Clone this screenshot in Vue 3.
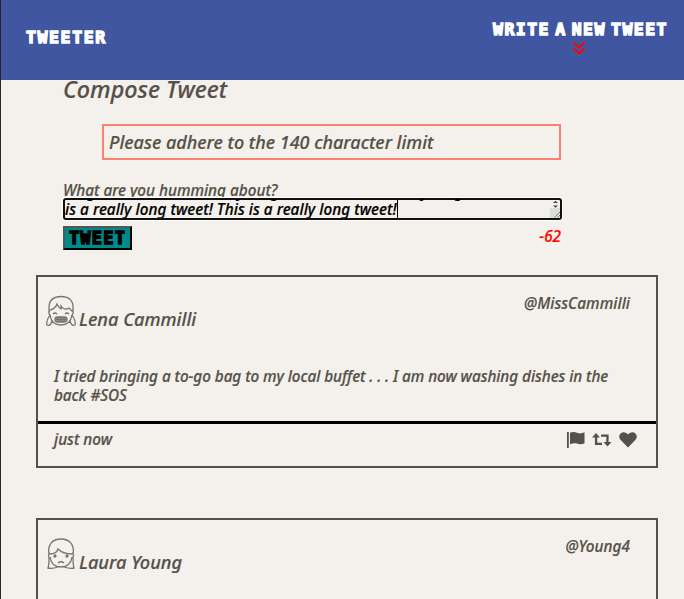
<script setup>
const tweets = [
  {
    name: 'Lena Cammilli',
    handle: '@MissCammilli',
    text: 'I tried bringing a to-go bag to my local buffet . . . I am now washing dishes in the back #SOS',
    age: 'just now',
    mood: 'grin',
  },
  { name: 'Laura Young', handle: '@Young4', text: '', age: '', mood: 'sad' },
]
</script>

<template>
  <div class="page">
    <nav class="nav">
      <span class="brand">TWEETER</span>
      <div class="compose-link">
        <span class="compose-text">WRITE A NEW TWEET</span>
        <svg class="chevrons" viewBox="0 0 14 14"><path d="M1.500 1.500 7 6.500l5.500-5M1.500 7.500 7 12.500l5.500-5" /></svg>
      </div>
    </nav>

    <main class="container">
      <section class="new-tweet">
        <h2 class="heading">Compose Tweet</h2>
        <div class="error"><span class="error-text">Please adhere to the 140 character limit</span></div>
        <div class="label">What are you humming about?</div>
        <div class="field">
          <div class="field-view">
            <div class="field-lines">
              <div class="line">long tweet! This is a really long tweet! This is a really long tweet! This</div>
              <div class="line current">is a really long tweet! This is a really long tweet!<i class="caret"></i></div>
            </div>
          </div>
          <svg class="scroller" viewBox="0 0 10 18">
            <rect y="8" width="10" height="10" fill="#dcdcdc" />
            <path d="M3 3 5.500.8 8 3zM3 5.500 5.500 7.700 8 5.500z" fill="#444" />
            <path d="M4.500 17.500 10 12M7.500 17.500l2.500-2.500" stroke="#666" stroke-width=".8" />
          </svg>
        </div>
        <div class="actions">
          <button class="submit">TWEET</button>
          <span class="counter">-62</span>
        </div>
      </section>

      <article v-for="t in tweets" :key="t.handle" class="tweet">
        <header class="tweet-head">
          <svg class="avatar" viewBox="0 0 30 32">
            <template v-if="t.mood === 'grin'">
              <path d="M3 17V12C3 5 8 1.500 15 1.500S27 5 27 12v5M4 15c4-1 6-3 7-6 1 2 2 4 4 5v-3c2 3 5 4 8 2l4 4M4 16c-2 1-1 3 0 4 1 7 5 10 11 10s10-3 11-10c1-1 2-3 0-4M4 20c-2 3-4 7-3 10 2 1 4 0 5-4M26 20c2 3 4 7 3 10-2 1-4 0-5-4" />
              <path d="M7 19q2-2 4 0M19 19q2-2 4 0" />
              <rect x="9" y="22" width="12" height="5" rx="2.500" fill="#aaa69f" />
              <path d="M10 24.500h10M12 22v5M15 22v5M18 22v5" />
            </template>
            <template v-else>
              <path d="M3 17C1 6 7 1 15 1s14 5 12 16M4 16c4 0 7-2 8-5 3 3 9 5 14 5M4 15c-2 1-2 4 0 5M26 15c2 1 2 4 0 5M4 19c1 7 5 10 11 10s10-3 11-10M3 19c0 5 0 8-1 11 4 1 7 0 10-1M27 19c0 5 0 8 1 11-4 1-7 0-10-1M12 25q3-2.500 6 0" />
              <circle cx="9" cy="18" r="1" fill="#625e57" />
              <circle cx="21" cy="18" r="1" fill="#625e57" />
            </template>
          </svg>
          <span class="name">{{ t.name }}</span>
          <span class="handle">{{ t.handle }}</span>
        </header>
        <p class="text">{{ t.text }}</p>
        <footer class="tweet-foot">
          <span>{{ t.age }}</span>
          <span class="icons">
            <svg width="18" height="18" viewBox="0 0 18 18"><path d="M0 1h1.800v16H0zM3 1.800c3-1.600 5-.8 7.500.2 2.500.8 4.500.5 7-.7v11c-3 1.500-5 1.200-7.500.3-2.500-.8-4.500-.4-7 .6z" /></svg>
            <svg width="20" height="18" viewBox="0 0 20 18"><path d="M4 2 0 6.500h2.900V14H10v-2.200H5.200V6.500H8zM9 3.500v2.200h5.300V11h-2.800l4 4.500 4-4.500h-2.900V3.500z" /></svg>
            <svg width="18" height="18" viewBox="0 0 18 18"><path d="M9 16.500 1.700 9C-.3 6.900-.2 3.700 1.900 2.200 4 .6 6.900 1.200 9 3.500c2.100-2.300 5-2.900 7.100-1.300 2.100 1.500 2.200 4.700.2 6.800z" /></svg>
          </span>
        </footer>
      </article>
    </main>
  </div>
</template>

<style>
body { background: #f4f0eb; overflow: hidden; }
</style>

<style scoped>
.page {
  box-sizing: border-box;
  height: 599px;
  overflow: hidden;
  border-left: 1px solid #25252b;
  background: #f4f0eb;
  color: #545149;
  font: italic 500 15.300px/19px "Noto Sans", sans-serif;
  -webkit-text-stroke: .2px currentColor;
}
.nav {
  display: flex;
  justify-content: space-between;
  align-items: flex-start;
  box-sizing: border-box;
  height: 80px;
  padding: 19px 16px 0 25px;
  background: #4056a1;
  color: #fff;
  font: 700 16.500px/22px "DejaVu Sans Mono", monospace;
  -webkit-text-stroke: 1.400px #fff;
}
.brand { padding-top: 8px; letter-spacing: 1.600px; }
.compose-link { display: flex; flex-direction: column; align-items: center; }
.compose-text { letter-spacing: 1.450px; word-spacing: -6.200px; white-space: nowrap; }
.chevrons { width: 14px; height: 14px; margin-right: 3px; fill: none; stroke: #f00; stroke-width: 2; }
.new-tweet { display: flex; flex-direction: column; height: 195px; padding: 0 122px 0 62px; }
.heading { margin: -6px 0 0; height: 44px; font-size: 23.300px; line-height: 30px; font-weight: 500; flex: none; }
.error {
  box-sizing: border-box;
  flex: none;
  height: 36px;
  margin: 6px 1px 0 39px;
  padding-left: 5px;
  border: 2px solid #fa8072;
  font-size: 18px;
  line-height: 32px;
  white-space: nowrap;
}
.label { height: 17px; margin-top: 21px; overflow: hidden; flex: none; }
.field {
  display: flex;
  box-sizing: border-box;
  flex: none;
  height: 22px;
  border: 2px solid #101010;
  border-radius: 3px;
  color: #000;
  box-shadow: 0 0 0 1px #fff;
}
.field-view { flex: 1; height: 19px; margin-top: -1px; overflow: hidden; }
.field-lines { margin-top: -17px; }
.line { height: 18px; white-space: nowrap; letter-spacing: .05px; }
.current { display: flex; }
.caret { width: 1px; height: 19px; background: #000; }
.scroller { width: 10px; height: 18px; fill: none; }
.actions { display: flex; justify-content: space-between; margin-top: 6px; flex: none; }
.submit {
  box-sizing: border-box;
  width: 69px;
  height: 24px;
  padding: 0;
  border: 2px outset #555;
  background: #008b8b;
  color: #000;
  font: 700 17px/20px "DejaVu Sans Mono", monospace;
  letter-spacing: 1.200px;
  -webkit-text-stroke: 1.500px #000;
}
.counter { color: #f00; padding: 1px 1px 0 0; }
.tweet {
  display: flex;
  flex-direction: column;
  box-sizing: border-box;
  height: 193px;
  margin: 0 26px 50px 35px;
  border: 2px solid #545149;
}
.tweet-head { display: flex; height: 90px; padding: 17px 26px 0 8px; box-sizing: border-box; }
.avatar { width: 30px; height: 32px; margin-top: 1px; fill: none; stroke: #77736c; stroke-width: 1.300; }
.name { font-size: 18.200px; line-height: 25px; padding: 13px 0 0 3px; }
.handle { margin-left: auto; letter-spacing: .05px; }
.text { margin: 0; height: 54px; padding: 0 30px 0 16px; letter-spacing: -.06px; }
.tweet-foot {
  display: flex;
  justify-content: space-between;
  border-top: 3px solid #000;
  padding: 6px 19px 0 16px;
}
.icons { display: flex; gap: 7px; padding-top: 1px; fill: #545149; }
</style>
